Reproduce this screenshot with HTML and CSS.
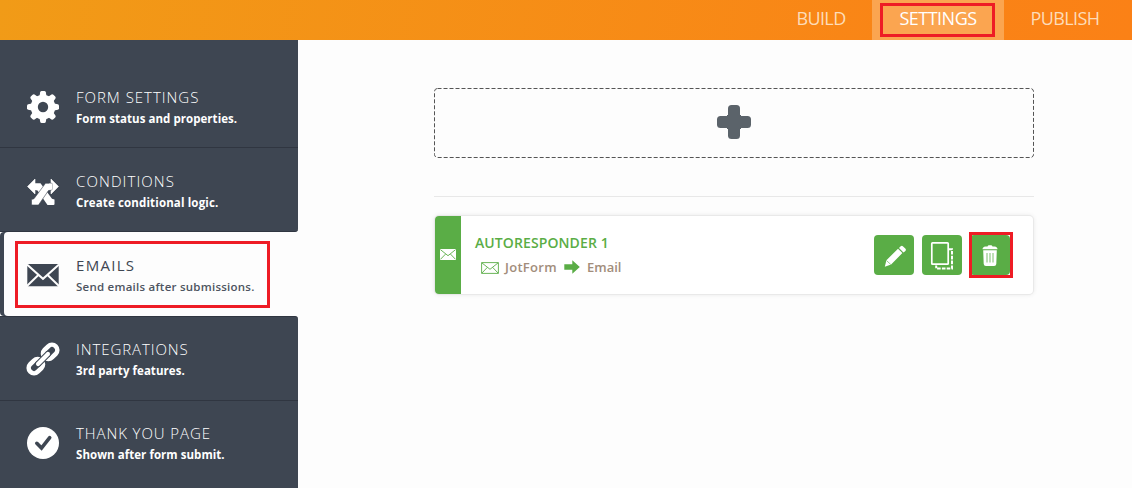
FILE: index.html
```html
<!DOCTYPE html>
<html lang="en">
<head>
    <meta charset="UTF-8">
    <meta name="viewport" content="width=device-width, initial-scale=1.0">
    <title>Form Settings - Emails</title>
    <link rel="stylesheet" href="styles.css">
</head>
<body>
    <nav class="topbar">
        <a class="tab tab-build">BUILD</a>
        <a class="tab tab-settings"><span class="marker"></span>SETTINGS</a>
        <a class="tab tab-publish">PUBLISH</a>
    </nav>

    <div class="page">
        <aside class="sidebar">
            <a class="item">
                <svg class="item-icon" viewBox="0 0 32 32">
                    <g fill="#fff">
                        <path id="tooth" d="M12.300 6 13.200 1.200Q13.500 0 14.700 0h2.600q1.200 0 1.500 1.200L19.700 6v20l-.9 4.800Q18.500 32 17.300 32h-2.600q-1.200 0-1.500-1.200L12.300 26z"/>
                        <use href="#tooth" transform="rotate(45 16 16)"/>
                        <use href="#tooth" transform="rotate(90 16 16)"/>
                        <use href="#tooth" transform="rotate(135 16 16)"/>
                        <circle cx="16" cy="16" r="12.300"/>
                    </g>
                    <circle cx="16" cy="16" r="5.200" fill="#3e4652"/>
                </svg>
                <div>
                    <div class="title t-form">FORM SETTINGS</div>
                    <div class="desc">Form status and properties.</div>
                </div>
            </a>
            <a class="item before-active">
                <svg class="item-icon" viewBox="0 0 32 32">
                    <g fill="#fff" stroke-linejoin="round">
                        <path d="M.5 11.500 8 4v15zM31.500 11.500 24 4v15z" stroke="#fff" stroke-width=".6"/>
                        <path d="M7 8.300h6.500L25 23.700l2.500.8V29q0 1-1 1h-6L10.500 15.500 7 14.800z"/>
                        <path d="M25 8.300h-6.500L7 23.700l-2.500.8V29q0 1 1 1h6l10-14.500 3.500-.7z" stroke="#3e4652" stroke-width=".6"/>
                        <path d="M22 8.600h3v6h-3z"/>
                    </g>
                </svg>
                <div>
                    <div class="title t-cond">CONDITIONS</div>
                    <div class="desc d-cond">Create conditional logic.</div>
                </div>
            </a>
            <a class="item active">
                <span class="marker"></span>
                <svg class="item-icon" viewBox="0 0 32 32">
                    <rect x=".3" y="5" width="31.400" height="22.300" rx="1" fill="#3e4652"/>
                    <path d="M0 5.500 16 19.800 32 5.500M0 27 11.600 15.700M32 27 20.400 15.700" fill="none" stroke="#fdfdfd" stroke-width="2"/>
                </svg>
                <div>
                    <div class="title t-mail">EMAILS</div>
                    <div class="desc">Send emails after submissions.</div>
                </div>
            </a>
            <a class="item after-active">
                <svg class="item-icon" viewBox="0 0 32 32">
                    <g fill="none" transform="rotate(-45 16 16)">
                        <rect x="-2" y="10.700" width="15.800" height="10.600" rx="5.300" stroke="#fff" stroke-width="4.600"/>
                        <rect x="18.200" y="10.700" width="15.800" height="10.600" rx="5.300" stroke="#fff" stroke-width="4.600"/>
                        <path d="M9 16h14" stroke="#3e4652" stroke-width="6.300" stroke-linecap="round"/>
                        <path d="M9 16h14" stroke="#fff" stroke-width="4.200" stroke-linecap="round"/>
                    </g>
                </svg>
                <div>
                    <div class="title t-int">INTEGRATIONS</div>
                    <div class="desc">3rd party features.</div>
                </div>
            </a>
            <a class="item last">
                <svg class="item-icon" viewBox="0 0 32 32">
                    <circle cx="16" cy="16" r="16" fill="#fff"/>
                    <path d="m9.800 16.300 4.700 4.700 8.200-10.300" fill="none" stroke="#3e4652" stroke-width="3.600" stroke-linecap="round"/>
                </svg>
                <div>
                    <div class="title t-thank">THANK YOU PAGE</div>
                    <div class="desc d-thank">Shown after form submit.</div>
                </div>
            </a>
        </aside>

        <main class="content">
            <div class="add-box">
                <svg width="600" height="70">
                    <rect x=".5" y=".5" width="599" height="69" rx="3" fill="none" stroke="#555" stroke-dasharray="4 2"/>
                    <rect x="294" y="17" width="12" height="34" rx="3.500" fill="#5b636a"/>
                    <rect x="283" y="28" width="34" height="12" rx="3.500" fill="#5b636a"/>
                    <path d="M293 27h14v14h-14z" fill="#5b636a"/>
                </svg>
            </div>
            <hr class="divider">
            <div class="card">
                <div class="card-side">
                    <svg width="16" height="11" viewBox="0 0 16 11">
                        <rect width="16" height="11" rx=".5" fill="#fff"/>
                        <path d="m.5.700 7.500 6 7.500-6M.5 10.300l5-5.200M15.500 10.300l-5-5.200" fill="none" stroke="#5aad46" stroke-width=".9"/>
                    </svg>
                </div>
                <div class="card-body">
                    <div class="card-title">AUTORESPONDER 1</div>
                    <div class="route">
                        <svg class="route-mail" width="18" height="12" viewBox="0 0 18 12">
                            <path d="M.6.600h16.800v10.800H.6zM.8.800 9 7.300 17.200.800M.8 11.200l5.600-5.900M17.200 11.200l-5.600-5.900" fill="none" stroke="#5aad46" stroke-width=".9"/>
                        </svg>
                        <span class="from">JotForm</span>
                        <svg class="arrow" width="16" height="14" viewBox="0 0 16 14">
                            <path d="M.3 4.200h8V.200L15.800 7l-7.500 6.800v-4h-8z" fill="#5aad46"/>
                        </svg>
                        <span class="to">Email</span>
                    </div>
                </div>
                <div class="actions">
                    <button class="btn" type="button">
                        <svg width="40" height="40" viewBox="0 0 40 40" fill="#fff">
                            <path d="m10.800 31.800 1.600-6.600L24 13.800l4.400 4.200-11.300 11.600zM25 12.900l1.700-1.600q1.200-1 2.400.1l2.200 2.100q1.200 1.200.1 2.400l-1.900 1.600z"/>
                            <path d="m12.500 25.600 4.300 3.900" stroke="#5aad46" stroke-width=".6"/>
                        </svg>
                    </button>
                    <button class="btn" type="button">
                        <svg width="40" height="40" viewBox="0 0 40 40" fill="none" stroke="#fff">
                            <rect x="9.800" y="7.800" width="16.400" height="21.400" rx=".7" stroke-width="1.700"/>
                            <path d="M27 14.200h3v19.300H14.200v-3" stroke-width="2" stroke-dasharray="3.600 1.200"/>
                        </svg>
                    </button>
                    <button class="btn btn-delete" type="button">
                        <svg width="40" height="40" viewBox="0 0 40 40" fill="#fff">
                            <path d="M12.500 14.300q0-2.300 3-2.700l2-.2q.3-1.200 1.500-1.200h2q1.200 0 1.500 1.200l2 .2q3 .4 3 2.700zM13.200 15.300h13.600L26.300 29q-.2 2-2.200 2h-8.200q-2 0-2.200-2z"/>
                            <path d="M17 18v9.500M20 18v9.500M23 18v9.500" stroke="#5aad46" stroke-width=".8"/>
                        </svg>
                        <span class="marker"></span>
                    </button>
                </div>
            </div>
        </main>
    </div>
</body>
</html>
```
FILE: styles.css
```css
body {
    margin: 0;
    height: 488px;
    overflow: hidden;
    background: #fdfdfd;
    font-family: "Open Sans", "Noto Sans", sans-serif;
}

/* Top bar */
.topbar {
    display: flex;
    justify-content: flex-end;
    height: 40px;
    background: linear-gradient(100deg, #f19b17, #fa8316 85%, #fb8116);
}

.tab {
    position: relative;
    display: flex;
    justify-content: center;
    width: 132px;
    height: 40px;
    font-size: 18px;
    line-height: 37px;
    color: #fddcb9;
}

.tab-build {
    width: 102px;
    letter-spacing: -0.6px;
}

.tab-settings {
    background: #fba550;
    color: #fff;
    letter-spacing: -0.5px;
}

.tab-publish {
    width: 128px;
    letter-spacing: -0.6px;
    text-indent: -6px;
}

/* Red highlight frame */
.marker {
    position: absolute;
    box-sizing: border-box;
    border: 3px solid #ee1c25;
    z-index: 2;
}

.tab-settings .marker {
    left: 8px;
    top: 3px;
    width: 115px;
    height: 34px;
}

.page {
    display: flex;
    height: 448px;
}

/* Sidebar */
.sidebar {
    box-sizing: border-box;
    width: 298px;
    padding-top: 24px;
    background: linear-gradient(#3e4652 0 180px, #fdfdfd 180px 290px, #3e4652 290px);
}

.item {
    position: relative;
    box-sizing: border-box;
    display: flex;
    gap: 17px;
    height: 84px;
    padding: 23px 0 0 27px;
    background: #3e4652;
    color: #fff;
    border-bottom: 1px solid #303641;
}

.item-icon {
    width: 32px;
    height: 32px;
    margin-top: 4px;
    flex: none;
    overflow: visible;
}

.before-active {
    border-bottom-right-radius: 3px;
}

.active {
    background: #fdfdfd;
    color: #3e4652;
    border-bottom: 0;
    margin-left: 4px;
    padding-left: 23px;
    border-radius: 4px 0 0 4px;
    box-shadow: -4px 0 0 #3e4652;
}

.active .marker {
    left: 11px;
    top: 9px;
    width: 255px;
    height: 67px;
}

.after-active {
    border-bottom: 0;
    border-top: 1px solid #303641;
    border-top-right-radius: 3px;
    padding-top: 22px;
}

.last {
    height: 88px;
    border-bottom: 0;
    border-top: 1px solid #303641;
    padding-top: 22px;
}

.title {
    font-size: 15px;
    line-height: 20px;
    font-weight: 300;
    letter-spacing: 0.98px;
    white-space: nowrap;
}

.t-cond {
    letter-spacing: 1.1px;
}

.t-mail {
    letter-spacing: 1.3px;
}

.t-int,
.t-thank {
    letter-spacing: 0.92px;
}

.desc {
    margin-top: 3px;
    font-size: 11.5px;
    line-height: 18px;
    font-weight: 700;
    letter-spacing: 0.05px;
    white-space: nowrap;
}

.d-cond {
    letter-spacing: 0.14px;
}

.active .title {
    font-weight: 500;
}

.active .desc {
    font-weight: 600;
    letter-spacing: 0.24px;
    color: #4d5460;
}

/* Content */
.content {
    width: 600px;
    padding: 48px 0 0 136px;
}

.add-box {
    height: 70px;
}

.add-box svg {
    display: block;
}

.divider {
    height: 1px;
    margin: 38px 0 19px;
    border: 0;
    background: #e8e8e8;
}

.card {
    display: flex;
    height: 78px;
    margin: 0 1px;
    background: #fff;
    border-radius: 4px;
    box-shadow: 0 0 0 1px #e9e9e9, 0 0 5px rgba(0, 0, 0, 0.12);
}

.card-side {
    box-sizing: border-box;
    display: flex;
    align-items: center;
    justify-content: center;
    width: 26px;
    padding-bottom: 2px;
    background: #5aad46;
    border-radius: 4px 0 0 4px;
}

.card-body {
    flex: 1;
    padding: 17px 0 0 14px;
}

.card-title {
    font-size: 14px;
    line-height: 20px;
    font-weight: 600;
    letter-spacing: 0.1px;
    color: #5aad46;
}

.route {
    display: flex;
    align-items: center;
    margin-top: 4px;
    padding-left: 6px;
    font-size: 13px;
    line-height: 20px;
    font-weight: 600;
    color: #a28d7b;
}

.route-mail {
    margin-top: 1px;
}

.from {
    width: 52px;
    margin-left: 6px;
    letter-spacing: 0.3px;
}

.arrow {
    margin: -1px 7px 0;
}

.actions {
    display: flex;
    gap: 8px;
    padding: 19px 23px 0 0;
}

.btn {
    position: relative;
    width: 40px;
    height: 40px;
    padding: 0;
    border: 0;
    border-radius: 4px;
    background: #5aad46;
}

.btn svg {
    display: block;
}

.btn-delete .marker {
    left: -1px;
    top: -3px;
    width: 44px;
    height: 46px;
}
```
